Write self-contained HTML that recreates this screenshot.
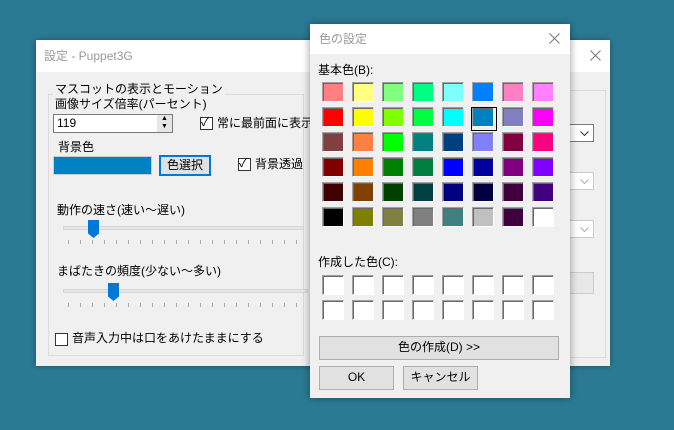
<!DOCTYPE html>
<html><head><meta charset="utf-8"><style>
*{margin:0;padding:0;box-sizing:border-box}
body{width:674px;height:430px;background:#2b7a94;position:relative;overflow:hidden;font-family:"Liberation Sans","Noto Sans CJK JP",sans-serif;font-size:12px;color:#000}
.a{position:absolute}
.t{position:absolute;white-space:nowrap;line-height:14px}
.cb{position:absolute;width:13px;height:13px;border:1px solid #333;background:#fff}
.sw{position:absolute;width:22px;height:20px;border:1px solid #fff;border-top-color:#a0a0a0;border-left-color:#a0a0a0;box-shadow:inset 1px 1px 0 #696969}
.btn{position:absolute;background:#e1e1e1;border:1px solid #adadad;text-align:center;line-height:21px}
.tick{position:absolute;width:1px;height:4px;background:#aaa}
</style></head><body>
<div class="a" style="left:36px;top:40px;width:574px;height:326px;background:#f0f0f0;box-shadow:0 0 6px rgba(0,0,0,.35)"></div>
<div class="a" style="left:36px;top:40px;width:574px;height:32px;background:#fff"></div>
<div class="t" style="left:44px;top:49px;color:#999;font-size:12px">設定 - Puppet3G</div>
<svg class="a" style="left:590px;top:50px" width="11" height="11"><path d="M0.5 0.5L10.5 10.5M10.5 0.5L0.5 10.5" stroke="#777" stroke-width="1"/></svg>
<div class="a" style="left:48px;top:94px;width:256px;height:262px;border:1px solid #dcdcdc"></div>
<div class="a" style="left:560px;top:90px;width:46px;height:268px;border:1px solid #dcdcdc;border-left:none"></div>
<div class="t" style="left:53px;top:82px;background:#f0f0f0;padding:0 2px">マスコットの表示とモーション</div>
<div class="t" style="left:55px;top:97px">画像サイズ倍率(パーセント)</div>
<div class="a" style="left:53px;top:114px;width:120px;height:19px;background:#fff;border:1px solid #7a7a7a"></div>
<div class="t" style="left:57px;top:116px">119</div>
<div class="a" style="left:157px;top:115px;width:15px;height:17px;background:#e6e6e6;font-size:7px;line-height:8px;text-align:center">▲<br>▼</div>
<div class="cb" style="left:200px;top:117px"></div><div class="t" style="left:201px;top:115px">✓</div>
<div class="t" style="left:217px;top:116px">常に最前面に表示</div>
<div class="t" style="left:58px;top:140px">背景色</div>
<div class="a" style="left:53px;top:156px;width:99px;height:19px;background:#0081c4;border:1px solid #ccc"></div>
<div class="btn" style="left:159px;top:155px;width:52px;height:21px;border:2px solid #0078d7;line-height:17px">色選択</div>
<div class="cb" style="left:238px;top:158px"></div><div class="t" style="left:239px;top:156px">✓</div>
<div class="t" style="left:255px;top:157px">背景透過</div>
<div class="t" style="left:57px;top:203px">動作の速さ(速い～遅い)</div>
<div class="a" style="left:63px;top:226px;width:241px;height:4px;background:#e7e7e7;border:1px solid #d6d6d6"></div>
<div class="a" style="left:88px;top:220px;width:11px;height:18px;background:#0078d7;clip-path:polygon(0 0,100% 0,100% 75%,50% 100%,0 75%)"></div>
<div class="t" style="left:57px;top:264px">まばたきの頻度(少ない～多い)</div>
<div class="a" style="left:63px;top:289px;width:245px;height:4px;background:#e7e7e7;border:1px solid #d6d6d6"></div>
<div class="a" style="left:108px;top:283px;width:11px;height:18px;background:#0078d7;clip-path:polygon(0 0,100% 0,100% 75%,50% 100%,0 75%)"></div>
<div id="ticks"></div>
<div class="cb" style="left:55px;top:333px"></div>
<div class="t" style="left:72px;top:331px">音声入力中は口をあけたままにする</div>
<div class="a" style="left:560px;top:124px;width:34px;height:18px;background:#fff;border:1px solid #7a7a7a"></div>
<svg class="a" style="left:580px;top:131px" width="9" height="5"><path d="M0.5 0.5L4.5 4.5L8.5 0.5" stroke="#333" fill="none"/></svg>
<div class="a" style="left:560px;top:172px;width:34px;height:18px;background:#fff;border:1px solid #ccc"></div>
<svg class="a" style="left:580px;top:179px" width="9" height="5"><path d="M0.5 0.5L4.5 4.5L8.5 0.5" stroke="#aaa" fill="none"/></svg>
<div class="a" style="left:560px;top:220px;width:34px;height:18px;background:#fff;border:1px solid #ccc"></div>
<svg class="a" style="left:580px;top:227px" width="9" height="5"><path d="M0.5 0.5L4.5 4.5L8.5 0.5" stroke="#aaa" fill="none"/></svg>
<div class="a" style="left:560px;top:272px;width:34px;height:22px;background:#e8e8e8;border:1px solid #ccc"></div>
<div class="a" style="left:310px;top:24px;width:260px;height:374px;background:#f0f0f0;box-shadow:0 0 8px rgba(0,0,0,.4)"></div>
<div class="a" style="left:310px;top:24px;width:260px;height:30px;background:#fff"></div>
<div class="t" style="left:319px;top:32px;color:#999">色の設定</div>
<svg class="a" style="left:549px;top:33px" width="11" height="11"><path d="M0.5 0.5L10.5 10.5M10.5 0.5L0.5 10.5" stroke="#777" stroke-width="1"/></svg>
<div class="t" style="left:318px;top:63px">基本色(B):</div>
<div id="sw"></div>
<div class="t" style="left:318px;top:255px">作成した色(C):</div>
<div class="btn" style="left:319px;top:336px;width:240px;height:24px">色の作成(D) &gt;&gt;</div>
<div class="btn" style="left:319px;top:366px;width:75px;height:24px">OK</div>
<div class="btn" style="left:403px;top:366px;width:75px;height:24px">キャンセル</div>
<script>
var c=[["#ff8080","#ffff80","#80ff80","#00ff80","#80ffff","#0080ff","#ff80c0","#ff80ff"],
["#ff0000","#ffff00","#80ff00","#00ff40","#00ffff","#0080c0","#8080c0","#ff00ff"],
["#804040","#ff8040","#00ff00","#008080","#004080","#8080ff","#800040","#ff0080"],
["#800000","#ff8000","#008000","#008040","#0000ff","#0000a0","#800080","#8000ff"],
["#400000","#804000","#004000","#004040","#000080","#000040","#400040","#400080"],
["#000000","#808000","#808040","#808080","#408080","#c0c0c0","#400040","#ffffff"]];
var h="";
for(var r=0;r<6;r++)for(var i=0;i<8;i++){h+='<div class="sw" style="left:'+(322+i*30)+'px;top:'+(82+r*25)+'px;background:'+c[r][i]+'"></div>';}
h+='<div class="a" style="left:471px;top:107px;width:26px;height:24px;border:1px solid #000"></div>';
for(var r=0;r<2;r++)for(var i=0;i<8;i++){h+='<div class="sw" style="left:'+(322+i*30)+'px;top:'+(275+r*25)+'px;background:#fff"></div>';}
document.getElementById("sw").outerHTML=h;
var t="";for(var i=0;i<20;i++){t+='<div class="tick" style="left:'+(68+i*12)+'px;top:240px"></div>';t+='<div class="tick" style="left:'+(68+i*12)+'px;top:303px"></div>';}
document.getElementById("ticks").outerHTML=t;
</script>
</body></html>
